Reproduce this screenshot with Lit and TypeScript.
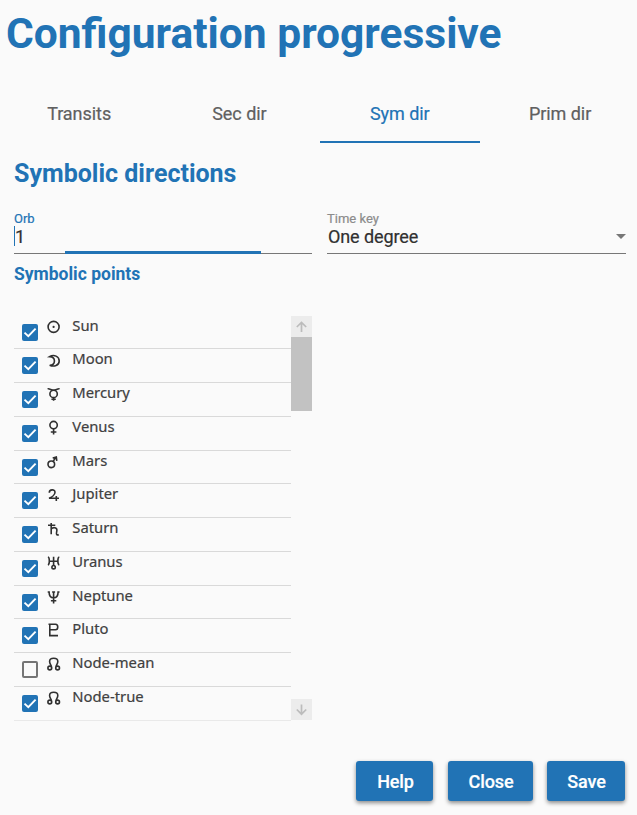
import { LitElement, html, svg, css } from "lit";
import { customElement, state } from "lit/decorators.js";

interface Point {
  name: string;
  selected: boolean;
  glyph: unknown;
}

const node = svg`<circle cx="3.800" cy="12" r="1.900"/><circle cx="11.600" cy="12" r="1.900"/><path d="M5.300 10.600C5.300 9 3.600 8 3.600 5.500C3.600 3.300 5 2.300 7.700 2.300S11.800 3.300 11.800 5.500C11.800 8 10.100 9 10.100 10.600"/>`;

const points: Point[] = [
  { name: "Sun", selected: true, glyph: svg`<circle cx="7.600" cy="7.900" r="5.500"/><circle class="solid" cx="7.600" cy="7.900" r="1.100"/>` },
  { name: "Moon", selected: true, glyph: svg`<path d="M3.700 4.600C8 2.100 13.200 4.400 13.200 8.900S8 15.200 3.700 13.200C10 13.200 10 4.800 3.700 4.600Z"/>` },
  { name: "Mercury", selected: true, glyph: svg`<path d="M1.600 2.800C4 2.400 5 4.200 7.600 4.200S11.200 2.400 13.600 2.800M7.600 11.500V14.700M5.400 13.200H9.800"/><circle cx="7.600" cy="7.900" r="3.700"/>` },
  { name: "Venus", selected: true, glyph: svg`<circle cx="7.600" cy="5.100" r="3.700"/><path d="M7.600 8.800V14.600M4.800 12H10.400"/>` },
  { name: "Mars", selected: true, glyph: svg`<circle cx="5.300" cy="10.300" r="3.300"/><path d="M7.200 7.400L9.800 3.300M6.700 4L10.300 3.100L10.800 6.800"/>` },
  { name: "Jupiter", selected: true, glyph: svg`<path d="M3.300 5.700C3.300 2.300 9 1.800 9 5.300C9 7.700 6 10.200 3 11.200H13M10.300 9V13.900"/>` },
  { name: "Saturn", selected: true, glyph: svg`<path d="M2 4.200H9.300M5.200 1.900V13.300M5.200 8C7 6 10.800 6.200 10.900 9C10.900 11 9.800 12.700 10.800 13.600C11.300 14 12 14 12.700 13.500"/>` },
  { name: "Uranus", selected: true, glyph: svg`<path d="M1.900 2C3.800 2.300 3.800 9.500 1.900 10M13.300 2C11.400 2.300 11.400 9.500 13.300 10M3.300 6.200H11.900M7.600 1.800V10.500"/><circle cx="7.600" cy="12.200" r="1.700"/>` },
  { name: "Neptune", selected: true, glyph: svg`<path d="M1.700 3H3.100C3.100 6.500 4 8.800 7.600 8.800S12.100 6.500 12.100 3H13.500M7.600 2.700V14.400M4.900 11.800H10.300M6.100 3H9.100"/>` },
  { name: "Pluto", selected: true, glyph: svg`<path d="M2.500 2.200H9.500C12.500 2.200 12.500 7.700 9.500 7.700H3.800M3.800 2.200V13.600H12"/>` },
  { name: "Node-mean", selected: false, glyph: node },
  { name: "Node-true", selected: true, glyph: node },
];

@customElement("app-root")
export class AppRoot extends LitElement {
  @state() private items = points;
  @state() private active = 2;
  private tabs = ["Transits", "Sec dir", "Sym dir", "Prim dir"];

  static styles = css`
    :host {
      display: block;
      box-sizing: border-box;
      height: 815px;
      overflow: hidden;
      background: #fafafa;
      color: #404040;
      font-family: Roboto, sans-serif;
      --primary: #2173b5;
    }
    * { box-sizing: border-box; }
    .page { display: flex; flex-direction: column; height: 100%; }
    h1, h2, h3 { margin: 0; color: var(--primary); white-space: nowrap; }
    h1 { height: 83px; padding: 9px 0 0 6px; font-size: 42.500px; line-height: 50px; font-weight: 700; }
    .tabs { display: flex; height: 61px; margin-left: -1px; }
    .tab {
      flex: 0 0 160.300px; height: 60px; line-height: 61px; text-align: center;
      font-size: 18px; color: #606060; letter-spacing: -0.050px;
      -webkit-text-stroke: 0.200px currentColor;
      border-bottom: 2px solid transparent;
    }
    .tab.active { color: var(--primary); border-color: var(--primary); }
    .content { padding: 0 11px 0 14px; }
    h2 { height: 67px; padding-top: 15px; font-size: 25px; line-height: 30px; font-weight: 700; }
    .fields { display: grid; grid-template-columns: 298px 299px; column-gap: 15px; }
    .field { height: 43px; border-bottom: 1px solid #777; position: relative; }
    .label { font-size: 13px; line-height: 15px; height: 15px; color: #8c8c8c; -webkit-text-stroke: 0.200px currentColor; }
    .label.focus { color: var(--primary); }
    .value { display: flex; align-items: center; justify-content: space-between; height: 20px; font-size: 18px; letter-spacing: -0.100px; color: #303030; padding-left: 1px; -webkit-text-stroke: 0.200px currentColor; }
    .field.text .value { border-left: 1px solid var(--primary); padding-left: 0; }
    .ripple { position: absolute; left: 51px; width: 196px; height: 3px; bottom: -1px; background: var(--primary); }
    .arrow { width: 0; height: 0; border: 5px solid transparent; border-top-color: #777; border-bottom: 0; }
    h3 { height: 61.500px; padding-top: 9px; font-size: 17.500px; line-height: 22px; font-weight: 700; }
    .list { display: flex; width: 298px; height: 405px; }
    .rows { width: 277px; }
    .row { display: flex; height: 33.750px; padding-left: 8px; border-bottom: 1px solid #d9d9d9; }
    .row:last-child { border-color: #e9e9e9; }
    .box { width: 16px; height: 17px; margin-top: 8px; border-radius: 2px; border: 2px solid #757575; }
    .box.on { background: var(--primary); border: 0; }
    .box svg { display: block; width: 16px; height: 17px; fill: none; stroke: #fff; stroke-width: 1.900; }
    .glyph { width: 16px; height: 16px; margin: 3px 10px 0 8px; fill: none; stroke: #303030; stroke-width: 1.600; }
    .solid { fill: #303030; stroke: none; }
    .name { font: 14.800px/20px "Noto Sans", sans-serif; margin-top: -0.850px; padding-left: 0.300px; white-space: nowrap; -webkit-text-stroke: 0.200px currentColor; }
    .scroll { display: flex; flex-direction: column; justify-content: space-between; width: 21px; margin-top: 0.500px; height: 404px; }
    .thumb { height: 74px; background: #c2c2c2; margin-bottom: auto; }
    .step { height: 21px; background: #ececec; }
    .step svg { display: block; width: 21px; height: 21px; fill: none; stroke: #bcbcbc; stroke-width: 1.700; }
    .actions { display: flex; justify-content: flex-end; gap: 14px; margin-top: 40px; padding-right: 12px; }
    .btn {
      height: 40px; width: 77px; padding: 2px 0 0 1px; border: 0; border-radius: 3px;
      background: var(--primary); color: #fff; font: 500 18px/38px Roboto, sans-serif;
      letter-spacing: -0.100px;
      -webkit-text-stroke: 0.200px currentColor;
      box-shadow: 0 2px 4px rgba(0, 0, 0, 0.45);
    }
    .btn:first-child { margin-right: 1px; padding-left: 2px; }
    .btn.wide { width: 85px; }
    .btn.mid { width: 78px; }
  `;

  private toggle(p: Point) {
    this.items = this.items.map((q) => (q === p ? { ...q, selected: !q.selected } : q));
  }

  render() {
    return html`
      <div class="page">
        <h1>Configuration progressive</h1>
        <nav class="tabs">
          ${this.tabs.map((t, i) => html`<div class="tab ${i === this.active ? "active" : ""}" @click=${() => (this.active = i)}>${t}</div>`)}
        </nav>
        <main class="content">
          <h2>Symbolic directions</h2>
          <div class="fields">
            <div class="field text">
              <div class="label focus">Orb</div>
              <div class="value">1</div>
              <div class="ripple"></div>
            </div>
            <div class="field">
              <div class="label">Time key</div>
              <div class="value"><span>One degree</span><span class="arrow"></span></div>
            </div>
          </div>
          <h3>Symbolic points</h3>
          <div class="list">
            <div class="rows">
              ${this.items.map((p) => html`
                <div class="row">
                  <div class="box ${p.selected ? "on" : ""}" @click=${() => this.toggle(p)}>
                    ${p.selected ? html`<svg viewBox="0 0 16 17"><path d="M2.500 8.600L6.300 12.200L13.600 4.600" /></svg>` : ""}
                  </div>
                  <svg class="glyph" viewBox="0 0 16 16">${p.glyph}</svg>
                  <span class="name">${p.name}</span>
                </div>`)}
            </div>
            <div class="scroll">
              <div class="step"><svg viewBox="0 0 21 21"><path d="M10.500 16V7M5.800 11L10.500 6.500L15.200 11" /></svg></div>
              <div class="thumb"></div>
              <div class="step"><svg viewBox="0 0 21 21"><path d="M10.500 5.500V15M5.800 10.500L10.500 15.200L15.200 10.500" /></svg></div>
            </div>
          </div>
        </main>
        <footer class="actions">
          <button class="btn">Help</button>
          <button class="btn wide">Close</button>
          <button class="btn mid">Save</button>
        </footer>
      </div>`;
  }
}
